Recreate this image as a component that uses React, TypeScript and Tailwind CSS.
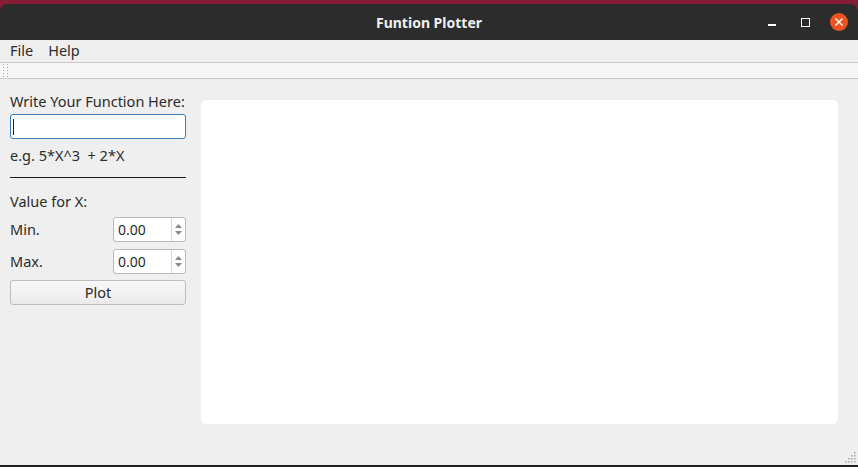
import React from 'react';

const font = { fontFamily: '"Noto Sans", "DejaVu Sans", sans-serif' };

const SpinBox: React.FC = () => (
  <div className="flex h-[25px] w-[73px] rounded-[3px] border border-[#b9b9b9] bg-white">
    <div className="flex flex-1 items-center pl-[4px] text-[14px] text-[#2b2b2b]">0.00</div>
    <div className="flex w-[14px] flex-col items-center justify-center gap-[3px] border-l border-[#d6d6d6]">
      <svg width="7" height="4" viewBox="0 0 7 4">
        <path d="M0 4 L3.5 0 L7 4 Z" fill="#8a8a8a" />
      </svg>
      <svg width="7" height="4" viewBox="0 0 7 4">
        <path d="M0 0 L3.5 4 L7 0 Z" fill="#8a8a8a" />
      </svg>
    </div>
  </div>
);

const App: React.FC = () => {
  return (
    <div className="flex h-[467px] w-[858px] flex-col overflow-hidden bg-[#861b35]" style={font}>
      {/* title bar */}
      <div className="mt-[4px] flex h-[36px] items-center rounded-t-[7px] bg-[#2c2c2c]">
        <div className="w-[120px]" />
        <div className="flex-1 pt-[1px] text-center text-[14px] font-bold text-[#f0f0f0]">Funtion Plotter</div>
        <div className="flex w-[120px] items-center justify-end pr-[10px]">
          <div className="mt-[6px] h-[2px] w-[8px] bg-white" />
          <div className="ml-[25px] h-[9px] w-[9px] border-[1.5px] border-white" />
          <div className="ml-[20px] flex h-[18px] w-[18px] items-center justify-center rounded-full bg-[#e95420]">
            <svg width="8" height="8" viewBox="0 0 8 8">
              <path d="M0.5 0.5 L7.5 7.5 M7.5 0.5 L0.5 7.5" stroke="white" strokeWidth="1.4" />
            </svg>
          </div>
        </div>
      </div>

      {/* window body */}
      <div className="flex flex-1 flex-col bg-[#efefef]">
        {/* menu bar */}
        <div className="flex h-[22px] items-center gap-[15px] pl-[10px] text-[14.5px] text-[#2b2b2b]">
          <span>File</span>
          <span>Help</span>
        </div>

        {/* toolbar */}
        <div className="flex h-[17px] items-center border-y border-[#c8c8c8] bg-[#f6f6f6] pl-[3px]">
          <svg width="6" height="13" viewBox="0 0 6 13">
            {[0, 3, 6, 9, 12].map((y) => (
              <g key={y}>
                <rect x="0" y={y} width="1" height="1" fill="#a8a8a8" />
                <rect x="4" y={y} width="1" height="1" fill="#a8a8a8" />
              </g>
            ))}
          </svg>
        </div>

        {/* central widget */}
        <div className="flex flex-1 text-[14.5px] text-[#2b2b2b]">
          <div className="flex w-[186px] flex-col pl-[10px] pt-[12px]">
            <div className="h-[20px] leading-[20px] whitespace-nowrap">Write Your Function Here:</div>
            <div className="mt-[3px] flex h-[25px] items-center rounded-[3px] border border-[#3d7bbf] bg-white pl-[2px]">
              <div className="h-[16px] w-[1px] bg-[#222]" />
            </div>
            <div className="mt-[6px] h-[20px] leading-[20px] whitespace-pre">e.g. 5*X^3  + 2*X</div>
            <div className="mt-[12px] h-[1px] bg-[#1a1a1a]" />
            <div className="mt-[13px] h-[20px] leading-[20px]">Value for X:</div>
            <div className="mt-[6px] flex items-center justify-between">
              <span>Min.</span>
              <SpinBox />
            </div>
            <div className="mt-[7px] flex items-center justify-between">
              <span>Max.</span>
              <SpinBox />
            </div>
            <div className="mt-[6px] flex h-[25px] items-center justify-center rounded-[3px] border border-[#bdbdbd] bg-gradient-to-b from-[#f8f8f8] to-[#ebebeb]">
              Plot
            </div>
          </div>

          <div className="ml-[15px] mt-[21px] h-[324px] w-[637px] rounded-[5px] bg-white" />

          <div className="relative flex-1">
            <svg className="absolute bottom-[2px] right-[2px]" width="11" height="11" viewBox="0 0 11 11">
              {[
                [9, 0],
                [6, 3], [9, 3],
                [3, 6], [6, 6], [9, 6],
                [0, 9], [3, 9], [6, 9], [9, 9],
              ].map(([x, y]) => (
                <rect key={`${x}-${y}`} x={x} y={y} width="1.5" height="1.5" fill="#a8a8a8" />
              ))}
            </svg>
          </div>
        </div>
        <div className="h-[2px] bg-[#1e1e1e]" />
      </div>
    </div>
  );
};

export default App;
